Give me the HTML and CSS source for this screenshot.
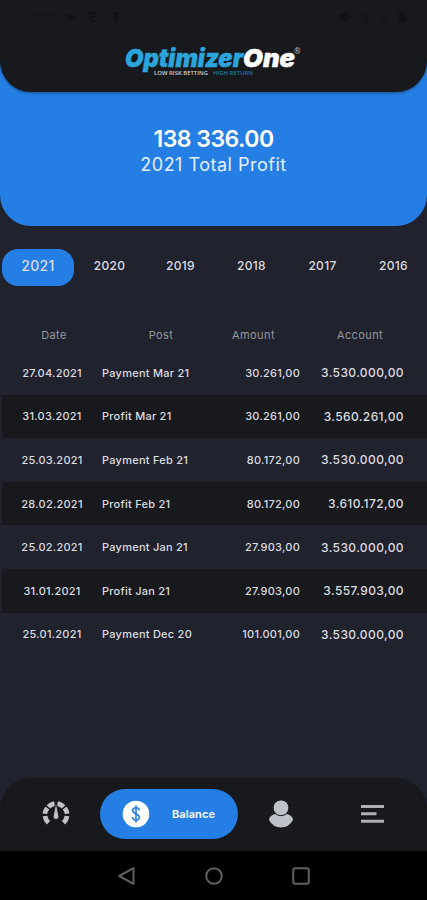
FILE: index.html
```html
<!doctype html>
<html lang="en">
<head>
  <meta charset="utf-8">
  <title>OptimizerOne - Balance</title>
  <meta name="viewport" content="width=device-width, initial-scale=1">
  <link rel="stylesheet" href="styles.css">
</head>

<body>
  <div class="app">
    <div class="hero">
      <header class="header">
        <div class="statusbar">
          <span class="clock">12:00</span>
          <svg class="notices" width="60" height="14" viewBox="0 0 60 14">
            <path d="M0 5h12l-6 6z"/>
            <path d="M24 2h8v2h-6v2h5v2h-5v2h6v2h-8zM46 2h9v2h-3v8h-3v-8h-3z"/>
          </svg>
          <svg class="signals" width="72" height="14" viewBox="0 0 72 14">
            <path d="M0 6q7-6 15 0l-7.500 6z"/>
            <path class="dim" d="M26 3h5v9h-5zM44 3h5v9h-5z"/>
            <path d="M61 4h2v-2h4v2h2v9h-8z"/>
          </svg>
        </div>
        <svg class="logo" width="180" height="34" viewBox="0 0 180 34">
          <text class="logo-name" y="24"><tspan class="blue" x="0" textLength="118" lengthAdjust="spacingAndGlyphs">Optimizer</tspan><tspan class="white" x="118" textLength="52" lengthAdjust="spacingAndGlyphs">One</tspan></text>
          <text class="logo-mark" x="169" y="11">®</text>
          <text class="logo-tag" x="29" y="31.500" textLength="54" lengthAdjust="spacingAndGlyphs">LOW RISK BETTING</text>
          <text class="logo-tag dark-blue" x="88" y="31.500" textLength="40" lengthAdjust="spacingAndGlyphs">HIGH RETURN</text>
        </svg>
      </header>
      <div class="total">138 336.00</div>
      <div class="total-label">2021 Total Profit</div>
    </div>

    <nav class="years">
      <span class="year active">2021</span>
      <span class="year">2020</span>
      <span class="year">2019</span>
      <span class="year">2018</span>
      <span class="year">2017</span>
      <span class="year">2016</span>
    </nav>

    <div class="table">
      <div class="table-head">
        <span>Date</span>
        <span>Post</span>
        <span>Amount</span>
        <span>Account</span>
      </div>
      <div class="row">
        <span class="date">27.04.2021</span>
        <span class="post">Payment Mar 21</span>
        <span class="amount">30.261,00</span>
        <span class="account">3.530.000,00</span>
      </div>
      <div class="row">
        <span class="date">31.03.2021</span>
        <span class="post">Profit Mar 21</span>
        <span class="amount">30.261,00</span>
        <span class="account">3.560.261,00</span>
      </div>
      <div class="row">
        <span class="date">25.03.2021</span>
        <span class="post">Payment Feb 21</span>
        <span class="amount">80.172,00</span>
        <span class="account">3.530.000,00</span>
      </div>
      <div class="row">
        <span class="date">28.02.2021</span>
        <span class="post">Profit Feb 21</span>
        <span class="amount">80.172,00</span>
        <span class="account">3.610.172,00</span>
      </div>
      <div class="row">
        <span class="date">25.02.2021</span>
        <span class="post">Payment Jan 21</span>
        <span class="amount">27.903,00</span>
        <span class="account">3.530.000,00</span>
      </div>
      <div class="row">
        <span class="date">31.01.2021</span>
        <span class="post">Profit Jan 21</span>
        <span class="amount">27.903,00</span>
        <span class="account">3.557.903,00</span>
      </div>
      <div class="row">
        <span class="date">25.01.2021</span>
        <span class="post">Payment Dec 20</span>
        <span class="amount">101.001,00</span>
        <span class="account">3.530.000,00</span>
      </div>
    </div>

    <nav class="tabs">
      <a class="tab">
        <svg width="28" height="28" viewBox="0 0 28 28">
          <path class="gauge" d="M6.500 22.800A11.300 11.300 0 0 1 3 16M2.900 13.800A11.300 11.300 0 0 1 5.400 8M6.400 6.900A11.300 11.300 0 0 1 12.500 3.700M15.500 3.700A11.300 11.300 0 0 1 21.600 6.900M22.600 8A11.300 11.300 0 0 1 25.100 13.800M25 16A11.300 11.300 0 0 1 21.500 22.800"/>
          <path class="needle" d="M14 2l3 14.500a3 3 0 0 1-6 0z"/>
        </svg>
      </a>
      <a class="tab tab-active">
        <svg width="28" height="28" viewBox="0 0 28 28">
          <circle cx="14" cy="14" r="13.300" fill="#fff"/>
          <path class="dollar" d="M17.200 10.500C16.800 6.800 10.700 7 10.700 10.600C10.700 14.300 17.400 13.500 17.400 17.200C17.400 20.900 10.700 21 10.400 17M14 5.500V22.500"/>
        </svg>
        <span>Balance</span>
      </a>
      <a class="tab">
        <svg width="28" height="30" viewBox="0 0 28 30">
          <path class="fill" d="M7 15.200H21Q26 17.500 26 21Q22 28.500 14 28.500T2 21Q2 17.500 7 15.200z"/>
          <circle class="head" cx="14" cy="8.800" r="7.900"/>
        </svg>
      </a>
      <a class="tab">
        <svg width="24" height="20" viewBox="0 0 24 20">
          <path class="lines" d="M0 2.500h23M0 9.800h15.500M0 17.200h23"/>
        </svg>
      </a>
    </nav>
    <div class="softkeys">
      <svg width="20" height="20" viewBox="0 0 20 20"><path d="M17.500 2.200v15.600L3.200 10z"/></svg>
      <svg width="20" height="20" viewBox="0 0 20 20"><circle cx="10" cy="10" r="7.800"/></svg>
      <svg width="20" height="20" viewBox="0 0 20 20"><rect x="2.200" y="2.200" width="15.600" height="15.600" rx="2"/></svg>
    </div>
  </div>
</body>
</html>
```
FILE: styles.css
```css
* {
  box-sizing: border-box;
}

body {
  margin: 0;
  background: #20222d;
  color: #dcdde0;
  font-family: Inter, sans-serif;
}

.app {
  display: flex;
  flex-direction: column;
  width: 427px;
  height: 900px;
  overflow: hidden;
}

.hero {
  height: 226px;
  background: #257ee4;
  border-radius: 0 0 31px 31px;
  color: #fff;
  text-align: center;
}

.header {
  height: 92px;
  background: #18191d;
  border-radius: 0 0 31px 31px;
  box-shadow: 0 1px 3px rgba(0, 0, 0, 0.4);
}

.statusbar {
  display: flex;
  align-items: center;
  height: 34px;
  padding: 0 18px 0 26px;
  color: #131418;
  font-size: 12px;
}

.statusbar svg {
  fill: #111216;
}

.statusbar .dim {
  fill: #151619;
}

.notices {
  margin-left: 8px;
}

.signals {
  margin-left: auto;
}

.logo {
  display: block;
  margin: 9px 0 0 125px;
  fill: #fff;
  overflow: visible;
}

.logo-name {
  font: italic 900 25px Inter, sans-serif;
  stroke-width: 0.500;
}

.logo-mark {
  font: 700 8px "Open Sans", sans-serif;
  fill: #a5a6a9;
}

.logo-tag {
  font: 600 5.500px "Open Sans", sans-serif;
  fill: #d0d0d2;
}

.blue {
  fill: #2ba5dc;
  stroke: #2ba5dc;
}

.white {
  stroke: #fff;
}

.dark-blue {
  fill: #237ba3;
}

.total {
  margin-top: 32px;
  font-size: 23px;
  font-weight: 600;
  line-height: 30px;
  letter-spacing: -0.500px;
}

.total-label {
  font-size: 18px;
  line-height: 22px;
  letter-spacing: 0.500px;
  color: #e5effc;
}

.years {
  display: flex;
  height: 37px;
  margin: 22.500px 0 0 2px;
}

.year {
  flex: 0 0 71px;
  line-height: 34px;
  text-align: center;
  font-size: 12px;
  font-weight: 500;
  letter-spacing: 0.300px;
}

.year.active {
  flex-basis: 72px;
  height: 37px;
  background: #257ee4;
  border-radius: 16px;
  font-size: 14px;
}

.table-head {
  display: grid;
  grid-template-columns: 108px 106px 79px 134px;
  height: 65.500px;
  padding-top: 42px;
  color: #96979e;
  font-size: 11px;
  line-height: 15px;
  letter-spacing: 0.400px;
  text-align: center;
}

.row {
  display: grid;
  grid-template-columns: 100px 100px 98px 104px;
  align-items: center;
  height: 43.600px;
  margin-left: 2px;
  font-size: 11px;
  font-weight: 500;
  letter-spacing: 0.250px;
}

.row:nth-child(odd) {
  background: #18191c;
}

.date {
  text-align: center;
}

.amount,
.account {
  text-align: right;
}

.account {
  font-size: 12px;
  letter-spacing: 0.400px;
}

.tabs {
  display: grid;
  grid-template-columns: 100px 138px 86px 93px;
  align-items: center;
  height: 73px;
  margin-top: auto;
  padding-bottom: 2px;
  background: #18191d;
  border-radius: 31px 31px 0 0;
}

.tab {
  display: flex;
  align-items: center;
  justify-content: center;
}

.tab:first-child {
  padding-left: 12px;
}

.tab:last-child {
  padding-left: 4px;
}

.tab-active {
  justify-content: space-between;
  height: 50px;
  padding: 0 23px 0 22px;
  background: #257ee4;
  border-radius: 25px;
  color: #fff;
  font-size: 11px;
  font-weight: 600;
  letter-spacing: 0.100px;
}

.fill {
  fill: #bfc1c9;
}

.head {
  fill: #bfc1c9;
  stroke: #18191d;
  stroke-width: 1;
}

.needle {
  fill: #bfc1c9;
  stroke: #18191d;
  stroke-width: 1;
}

.gauge {
  fill: none;
  stroke: #bfc1c9;
  stroke-width: 4.800;
}

.dollar {
  fill: none;
  stroke: #257ee4;
  stroke-width: 1.600;
}

.lines {
  stroke: #aeb0b6;
  stroke-width: 3;
}

.softkeys {
  display: flex;
  justify-content: center;
  gap: 67.500px;
  height: 49px;
  padding-top: 15px;
  background: #000;
}

.softkeys svg {
  fill: none;
  stroke: #606060;
  stroke-width: 2;
  stroke-linejoin: round;
}
```
